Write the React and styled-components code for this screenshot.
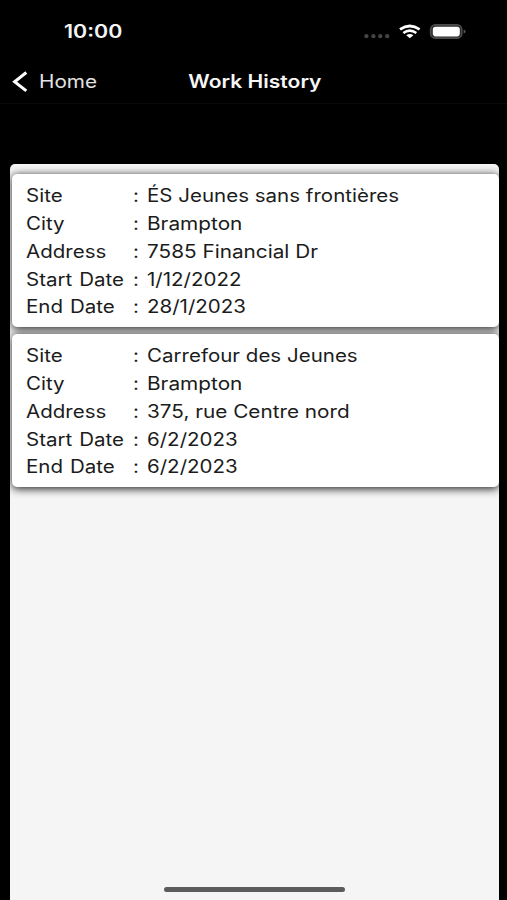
import React from 'react'
import styled, { createGlobalStyle } from 'styled-components'

const GlobalStyle = createGlobalStyle`
    * {
      box-sizing: border-box;
    }

    body {
      margin: 0;
      background: #000;
      font-family: Inter, 'Liberation Sans', sans-serif;
    }
`;

const Screen = styled.div`
    display: flex;
    flex-direction: column;
    height: 900px;
    overflow: hidden;
    background: #000;
`;

const StatusBar = styled.div`
    display: flex;
    align-items: center;
    justify-content: space-between;
    height: 62px;
    padding: 0 41px 0 64px;
`;

/* wide letterforms, every label is stretched a bit along x */
const Wide = styled.span`
    display: inline-block;
    white-space: pre;
    transform: scaleX(${props => props.$x || 1.14});
    transform-origin: ${props => props.$origin || 'left'} center;
`;

const Clock = styled.div`
    padding-top: 2px;
    font-size: 18px;
    font-weight: 600;
    line-height: 22px;
    color: #f4f4f4;
`;

const StatusIcons = styled.svg`
    display: block;
    width: 104px;
    height: 20px;
`;

const NavBar = styled.div`
    display: grid;
    grid-template-columns: 1fr auto 1fr;
    align-items: center;
    height: 42px;
    padding: 0 10px 2px 12px;
    border-bottom: 1px solid #0b0b0b;
`;

const BackButton = styled.button`
    display: flex;
    align-items: center;
    gap: 10.5px;
    padding: 0;
    border: 0;
    background: none;
    font-family: inherit;
    font-size: 18px;
    line-height: 22px;
    color: #e2e2e2;
`;

const Title = styled.div`
    font-size: 18px;
    font-weight: 600;
    line-height: 22px;
    color: #f6f6f6;
`;

const Panel = styled.div`
    display: flex;
    flex-direction: column;
    flex: 1;
    margin: 60px 8.5px 0 9.5px;
    padding: 9.5px 0 0 2.5px;
    border-radius: 5px 5px 0 0;
    background: #f5f5f5;
    overflow: hidden;
`;

const CardList = styled.div`
    display: flex;
    flex-direction: column;
    gap: 6.5px;
`;

const Card = styled.div`
    height: 153.5px;
    padding: 8.8px 0 0 13.8px;
    border-radius: 5px;
    background: #fff;
    box-shadow: 0 1.5px 8px rgba(0, 0, 0, 0.85);
`;

const Row = styled.div`
    display: grid;
    grid-template-columns: 107px 14px 1fr;
    align-items: center;
    height: 27.8px;
    font-size: 18px;
    line-height: 22px;
    color: #1c1c1c;
`;

const Label = styled.span`
    word-spacing: 1px;
`;

const HomeIndicator = styled.div`
    width: 181px;
    height: 5px;
    margin: auto auto 8.5px 151.5px;
    border-radius: 3px;
    background: #5c5c5c;
`;

const history = [
    {
        site: 'ÉS Jeunes sans frontières',
        city: 'Brampton',
        address: '7585 Financial Dr',
        start: '1/12/2022',
        end: '28/1/2023',
    },
    {
        site: 'Carrefour des Jeunes',
        city: 'Brampton',
        address: '375, rue Centre nord',
        start: '6/2/2023',
        end: '6/2/2023',
    },
]

const Field = ({ label, value, stretch }) => (
    <Row>
        <Label><Wide>{label}</Wide></Label>
        <span><Wide>:</Wide></span>
        <span><Wide $x={stretch}>{value}</Wide></span>
    </Row>
)

const WorkCard = ({ item }) => (
    <Card>
        <Field label="Site" value={item.site} />
        <Field label="City" value={item.city} stretch={1.155} />
        <Field label="Address" value={item.address} stretch={1.152} />
        <Field label="Start Date" value={item.start} />
        <Field label="End Date" value={item.end} />
    </Card>
)

export default function App() {
    return (
        <Screen>
            <GlobalStyle />
            <StatusBar>
                <Clock><Wide $x={1.19}>10:00</Wide></Clock>
                <StatusIcons viewBox="362 21 104 20">
                    <g fill="#454545">
                        <circle cx="366.4" cy="36.2" r="2.1" />
                        <circle cx="373.4" cy="36.2" r="2.1" />
                        <circle cx="380.3" cy="36.2" r="2.1" />
                        <circle cx="387.2" cy="36.2" r="2.1" />
                    </g>
                    <g fill="none" stroke="#fff" strokeWidth="2.7">
                        <path d="M400 29.4 Q409.8 22.6 419.6 29.4" />
                        <path d="M403.3 33 Q409.8 28.4 416.3 33" />
                    </g>
                    <path d="M406.2 35.3 Q409.8 32.6 413.4 35.3 L409.8 38.3 Z" fill="#fff" />
                    <rect x="430.6" y="24.9" width="31.2" height="13.2" rx="4.6" fill="#2a2a2a" stroke="#4c4c4c" strokeWidth="1.6" />
                    <rect x="432.8" y="26.8" width="27" height="9.6" rx="2.8" fill="#fff" />
                    <path d="M463.6 29.4 Q465.6 30 465.6 31.5 Q465.6 33 463.6 33.6 Z" fill="#555" />
                </StatusIcons>
            </StatusBar>
            <NavBar>
                <BackButton>
                    <svg width="16" height="22" viewBox="0 0 16 22" fill="none" stroke="#fff" strokeWidth="3">
                        <path d="M14.3 1.5 L2.6 10.7 L14.3 19.9" />
                    </svg>
                    <Wide $x={1.15}>Home</Wide>
                </BackButton>
                <Title><Wide $x={1.17} $origin="center">Work History</Wide></Title>
            </NavBar>
            <Panel>
                <CardList>
                    {history.map((item, i) => <WorkCard key={i} item={item} />)}
                </CardList>
                <HomeIndicator />
            </Panel>
        </Screen>
    )
}
